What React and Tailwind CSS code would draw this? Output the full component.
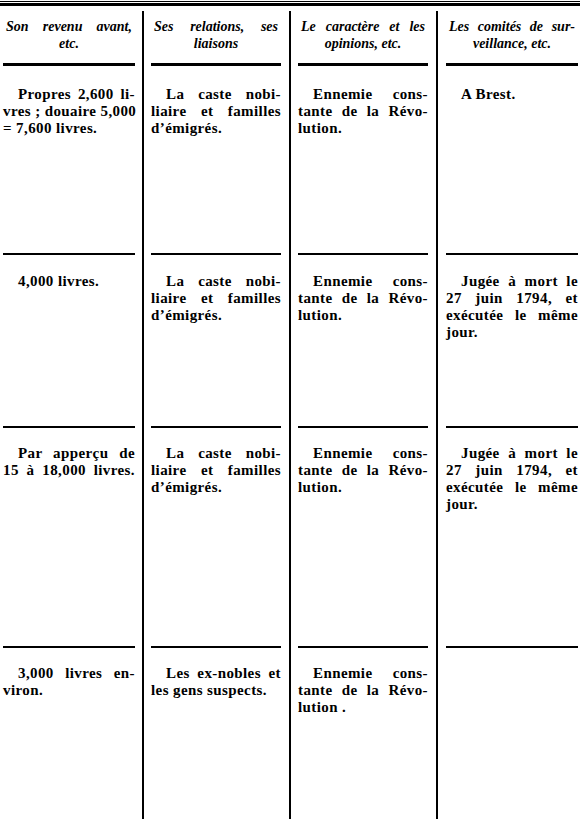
const cellPad = [
  "pl-[3px] pr-[7px] border-r-2 border-black",
  "pl-[7px] pr-[8px] border-r-2 border-black",
  "pl-[7px] pr-[8px] border-r-2 border-black",
  "pl-[8px] pr-[2px]",
];

const headers = [
  ["Son revenu avant,", "etc."],
  ["Ses relations, ses", "liaisons"],
  ["Le caractère et les", "opinions, etc."],
  ["Les comités de sur-", "veillance, etc."],
];

// each line: [text, justified]
const caste = [["La caste nobi-", true], ["liaire et familles", true], ["d’émigrés.", false]];
const ennemie = [["Ennemie cons-", true], ["tante de la Révo-", true], ["lution.", false]];
const jugee = [
  ["Jugée à mort le", true],
  ["27 juin 1794, et", true],
  ["exécutée le même", true],
  ["jour.", false],
];

const rows = [
  {
    h: "h-[189px]",
    pt: "pt-[20px]",
    cells: [
      [["Propres 2,600 li-", true], ["vres ; douaire 5,000", true], ["= 7,600 livres.", false]],
      caste,
      ennemie,
      [["A Brest.", false]],
    ],
  },
  {
    h: "h-[173px]",
    pt: "pt-[18px]",
    cells: [[["4,000 livres.", false]], caste, ennemie, jugee],
  },
  {
    h: "h-[220px]",
    pt: "pt-[17px]",
    cells: [
      [["Par apperçu de", true], ["15 à 18,000 livres.", true]],
      caste,
      ennemie,
      jugee,
    ],
  },
  {
    h: "h-[172px]",
    pt: "pt-[17px]",
    cells: [
      [["3,000 livres en-", true], ["viron.", false]],
      [["Les ex-nobles et", true], ["les gens suspects.", false]],
      [["Ennemie cons-", true], ["tante de la Révo-", true], ["lution .", false]],
      [],
    ],
    last: true,
  },
];

function Line({ text, justify, first }) {
  return (
    <div
      className={`whitespace-nowrap ${first ? "indent-[15px]" : ""} ${
        justify ? "text-justify [text-align-last:justify]" : "text-left"
      }`}
    >
      {text}
    </div>
  );
}

export default function App() {
  return (
    <div className="w-[580px] h-[819px] bg-white text-black font-['Liberation_Serif','Times_New_Roman',serif] overflow-hidden">
      {/* top rule */}
      <div className="h-[10px]">
        <div className="mt-px h-px bg-black" />
        <div className="mt-px h-[3px] bg-black" />
      </div>

      {/* header */}
      <div className="grid grid-cols-[144px_147px_147px_142px] h-[55px]">
        {headers.map((hd, i) => (
          <div key={i} className={`flex flex-col ${cellPad[i]}`}>
            <div className="pt-[7px] px-[3px] text-[14px] leading-[17px] font-bold italic">
              <div className="text-justify [text-align-last:justify] whitespace-nowrap">{hd[0]}</div>
              <div className="text-center">{hd[1]}</div>
            </div>
            <div className="mt-auto h-[3px] bg-black" />
          </div>
        ))}
      </div>

      {/* body rows */}
      {rows.map((row, r) => (
        <div key={r} className={`grid grid-cols-[144px_147px_147px_142px] ${row.h}`}>
          {row.cells.map((lines, i) => (
            <div key={i} className={`flex flex-col ${cellPad[i]}`}>
              <div className={`${row.pt} text-[15px] leading-[17px] font-bold tracking-[0.4px]`}>
                {lines.map((l, k) => (
                  <Line key={k} text={l[0]} justify={l[1]} first={k === 0} />
                ))}
              </div>
              {!row.last && <div className="mt-auto h-[2px] bg-black" />}
            </div>
          ))}
        </div>
      ))}
    </div>
  );
}
